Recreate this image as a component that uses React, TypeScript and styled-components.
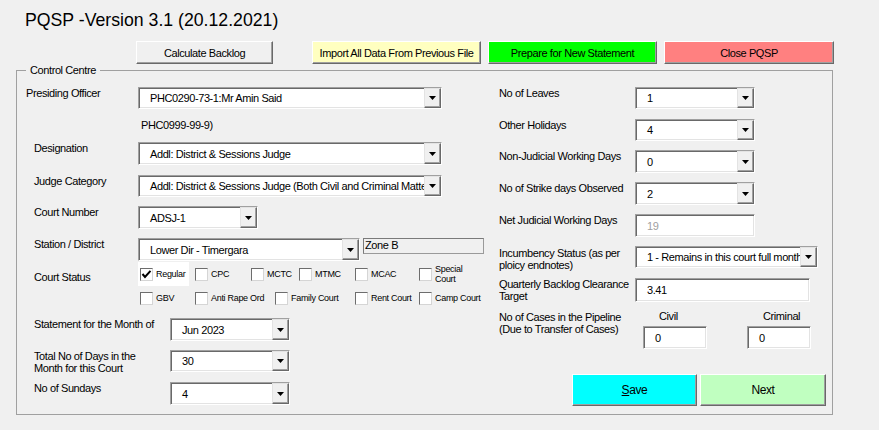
import React from "react";
import styled, { createGlobalStyle } from "styled-components";

const Global = createGlobalStyle`
  html, body { margin: 0; padding: 0; background: #f0f0f0; }
  * { box-sizing: border-box; }
`;

const Window = styled.div`
  width: 879px;
  height: 430px;
  overflow: hidden;
  background: #f0f0f0;
  font-family: "Liberation Sans", Arial, sans-serif;
  font-size: 11px;
  letter-spacing: -0.4px;
  color: #000;
  display: flex;
  flex-direction: column;
`;

const Title = styled.div`
  padding: 10px 0 0 25px;
  height: 30px;
  font-size: 17.7px;
  line-height: 20px;
  letter-spacing: 0;
  color: #000;
`;

const ButtonBar = styled.div`
  display: flex;
  margin-top: 11px;
  padding-left: 136px;
  height: 23px;
`;

const RaisedButton = styled.button<{ $w: number; $h: number; $bg: string; $ml?: number; $fs?: number }>`
  width: ${(p) => p.$w}px;
  height: ${(p) => p.$h}px;
  margin: 0 0 0 ${(p) => p.$ml ?? 0}px;
  padding: 0;
  background: ${(p) => p.$bg};
  border-style: solid;
  border-width: 1px;
  border-color: #ffffff #696969 #696969 #ffffff;
  box-shadow: inset -1px -1px 0 #a0a0a0;
  font-family: inherit;
  font-size: ${(p) => p.$fs ?? 11}px;
  letter-spacing: -0.4px;
  color: #000;
  display: flex;
  align-items: center;
  justify-content: center;
  cursor: default;
`;

const Frame = styled.fieldset`
  margin: 0 0 0 16px;
  padding: 0;
  width: 817px;
  height: 351px;
  min-width: 0;
  border: 1px solid #a0a0a0;
`;

const Legend = styled.legend`
  margin-left: 9px;
  padding: 0 4px;
  font-size: 11px;
  line-height: 12px;
`;

const Columns = styled.div`
  display: grid;
  grid-template-columns: 473px 1fr;
`;

const Column = styled.div`
  display: flex;
  flex-direction: column;
`;

const Row = styled.div<{ $mt: number; $h: number }>`
  display: flex;
  align-items: flex-start;
  margin-top: ${(p) => p.$mt}px;
  height: ${(p) => p.$h}px;
`;

const Label = styled.div<{ $w: number; $pl: number; $pt?: number }>`
  width: ${(p) => p.$w}px;
  flex: none;
  padding-left: ${(p) => p.$pl}px;
  padding-top: ${(p) => p.$pt ?? 0}px;
  line-height: 12px;
`;

const Note = styled.div<{ $pl: number }>`
  padding-left: ${(p) => p.$pl}px;
  line-height: 12px;
`;

const Sunken = styled.div<{ $w: number; $h: number }>`
  width: ${(p) => p.$w}px;
  height: ${(p) => p.$h}px;
  flex: none;
  display: flex;
  background: #fff;
  border-style: solid;
  border-width: 1px;
  border-color: #a0a0a0 #ffffff #ffffff #a0a0a0;
  box-shadow: inset 1px 1px 0 #696969, inset -1px -1px 0 #e3e3e3;
`;

const FieldText = styled.div<{ $muted?: boolean }>`
  flex: 1;
  min-width: 0;
  padding-left: 11px;
  display: flex;
  align-items: center;
  white-space: nowrap;
  overflow: hidden;
  color: ${(p) => (p.$muted ? "#a0a0a0" : "#000")};
`;

const DropButton = styled.div`
  width: 17px;
  flex: none;
  background: #f0f0f0;
  border-style: solid;
  border-width: 1px;
  border-color: #e3e3e3 #696969 #696969 #e3e3e3;
  box-shadow: inset -1px -1px 0 #a0a0a0;
  display: flex;
  align-items: center;
  justify-content: center;
`;

const ZoneBox = styled.div`
  width: 121px;
  height: 16px;
  margin-left: 3px;
  border: 1px solid #7a7a7a;
  border-right-color: #9a9a9a;
  border-bottom-color: #9a9a9a;
  padding-left: 1px;
  line-height: 13px;
`;

const CheckArea = styled.div`
  display: flex;
  flex-direction: column;
`;

const CheckRow = styled.div`
  display: flex;
`;

const CheckItem = styled.div<{ $w: number; $hl?: boolean; $mr?: number }>`
  width: ${(p) => p.$w}px;
  margin-right: ${(p) => p.$mr ?? 0}px;
  height: 24px;
  display: flex;
  align-items: center;
  padding-left: 2px;
  background: ${(p) => (p.$hl ? "#fff" : "transparent")};
`;

const Box = styled.div`
  width: 13px;
  height: 13px;
  flex: none;
  background: #fff;
  border-style: solid;
  border-width: 1px;
  border-color: #6d6d6d #d5d5d5 #d5d5d5 #6d6d6d;
  display: flex;
  align-items: center;
  justify-content: center;
`;

const CheckText = styled.span`
  margin-left: 3px;
  font-size: 9px;
  line-height: 10px;
  letter-spacing: -0.3px;
`;

const PipeGroup = styled.div<{ $ml: number }>`
  margin-left: ${(p) => p.$ml}px;
  display: flex;
  flex-direction: column;
`;

const PipeHead = styled.div`
  padding-left: 16px;
  line-height: 12px;
  height: 16px;
`;

const ActionBar = styled.div`
  display: flex;
  gap: 3px;
  margin-top: 25px;
  padding-left: 82px;
`;

const Arrow = () => (
  <svg width="7" height="4" viewBox="0 0 7 4">
    <path d="M0 0 H7 L3.5 4 Z" fill="#000" />
  </svg>
);

const Tick = () => (
  <svg width="11" height="11" viewBox="0 0 11 11">
    <path d="M1.5 5 L4 8 L9.5 1.8" fill="none" stroke="#000" strokeWidth="2" />
  </svg>
);

const Combo = ({ w, h, value }: { w: number; h: number; value: string }) => (
  <Sunken $w={w} $h={h}>
    <FieldText>{value}</FieldText>
    <DropButton>
      <Arrow />
    </DropButton>
  </Sunken>
);

const TextBox = ({ w, h, value, muted }: { w: number; h: number; value: string; muted?: boolean }) => (
  <Sunken $w={w} $h={h}>
    <FieldText $muted={muted}>{value}</FieldText>
  </Sunken>
);

const Check = ({ w, label, checked, hl, mr }: { w: number; label: React.ReactNode; checked?: boolean; hl?: boolean; mr?: number }) => (
  <CheckItem $w={w} $hl={hl} $mr={mr}>
    <Box>{checked && <Tick />}</Box>
    <CheckText>{label}</CheckText>
  </CheckItem>
);

export default function App() {
  return (
    <>
      <Global />
      <Window>
        <Title>PQSP -Version 3.1 (20.12.2021)</Title>
        <ButtonBar>
          <RaisedButton $w={137} $h={23} $bg="#f0f0f0">Calculate Backlog</RaisedButton>
          <RaisedButton $w={169} $h={23} $bg="#ffffc0" $ml={39}>Import All Data From Previous File</RaisedButton>
          <RaisedButton $w={169} $h={23} $bg="#00ff00" $ml={7}>Prepare for New Statement</RaisedButton>
          <RaisedButton $w={170} $h={23} $bg="#ff8080" $ml={7}>Close PQSP</RaisedButton>
        </ButtonBar>
        <Frame>
          <Legend>Control Centre</Legend>
          <Columns>
            <Column>
              <Row $mt={11} $h={22}>
                <Label $w={121} $pl={9}>Presiding Officer</Label>
                <Combo w={304} h={22} value="PHC0290-73-1:Mr Amin Said" />
              </Row>
              <Row $mt={10} $h={12}>
                <Note $pl={124}>PHC0999-99-9)</Note>
              </Row>
              <Row $mt={11} $h={23}>
                <Label $w={121} $pl={17}>Designation</Label>
                <Combo w={304} h={23} value="Addl: District & Sessions Judge" />
              </Row>
              <Row $mt={10} $h={22}>
                <Label $w={121} $pl={17}>Judge Category</Label>
                <Combo w={304} h={22} value="Addl: District & Sessions Judge (Both Civil and Criminal Matters)" />
              </Row>
              <Row $mt={9} $h={23}>
                <Label $w={121} $pl={17}>Court Number</Label>
                <Combo w={120} h={23} value="ADSJ-1" />
              </Row>
              <Row $mt={9} $h={23}>
                <Label $w={121} $pl={17}>Station / District</Label>
                <Combo w={222} h={23} value="Lower Dir - Timergara" />
                <ZoneBox>Zone B</ZoneBox>
              </Row>
              <Row $mt={1} $h={48}>
                <Label $w={121} $pl={17} $pt={9}>Court Status</Label>
                <CheckArea>
                  <CheckRow>
                    <Check w={51} mr={4} hl checked label="Regular" />
                    <Check w={56} label="CPC" />
                    <Check w={48} label="MCTC" />
                    <Check w={56} label="MTMC" />
                    <Check w={64} label="MCAC" />
                    <Check w={70} label={<>Special<br />Court</>} />
                  </CheckRow>
                  <CheckRow>
                    <Check w={55} label="GBV" />
                    <Check w={80} label="Anti Rape Ord" />
                    <Check w={80} label="Family Court" />
                    <Check w={64} label="Rent Court" />
                    <Check w={70} label="Camp Court" />
                  </CheckRow>
                </CheckArea>
              </Row>
              <Row $mt={8} $h={23}>
                <Label $w={153} $pl={17}>Statement for the Month of</Label>
                <Combo w={120} h={23} value="Jun 2023" />
              </Row>
              <Row $mt={9} $h={22}>
                <Label $w={153} $pl={17}>Total No of Days in the<br />Month for this Court</Label>
                <Combo w={120} h={22} value="30" />
              </Row>
              <Row $mt={10} $h={23}>
                <Label $w={153} $pl={17}>No of Sundays</Label>
                <Combo w={120} h={23} value="4" />
              </Row>
            </Column>
            <Column>
              <Row $mt={11} $h={22}>
                <Label $w={145} $pl={9}>No of Leaves</Label>
                <Combo w={120} h={22} value="1" />
              </Row>
              <Row $mt={10} $h={22}>
                <Label $w={145} $pl={9}>Other Holidays</Label>
                <Combo w={120} h={22} value="4" />
              </Row>
              <Row $mt={9} $h={23}>
                <Label $w={145} $pl={9}>Non-Judicial Working Days</Label>
                <Combo w={120} h={23} value="0" />
              </Row>
              <Row $mt={9} $h={23}>
                <Label $w={145} $pl={9}>No of Strike days Observed</Label>
                <Combo w={120} h={23} value="2" />
              </Row>
              <Row $mt={9} $h={23}>
                <Label $w={145} $pl={9}>Net Judicial Working Days</Label>
                <TextBox w={120} h={23} value="19" muted />
              </Row>
              <Row $mt={9} $h={22}>
                <Label $w={145} $pl={9} $pt={1}>Incumbency Status (as per<br />ploicy endnotes)</Label>
                <Combo w={183} h={22} value="1 - Remains in this court full month" />
              </Row>
              <Row $mt={10} $h={24}>
                <Label $w={145} $pl={9}>Quarterly Backlog Clearance<br />Target</Label>
                <TextBox w={175} h={24} value="3.41" />
              </Row>
              <Row $mt={8} $h={39}>
                <Label $w={145} $pl={9} $pt={1}>No of Cases in the Pipeline<br />(Due to Transfer of Cases)</Label>
                <PipeGroup $ml={8}>
                  <PipeHead>Civil</PipeHead>
                  <TextBox w={64} h={23} value="0" />
                </PipeGroup>
                <PipeGroup $ml={40}>
                  <PipeHead>Criminal</PipeHead>
                  <TextBox w={64} h={23} value="0" />
                </PipeGroup>
              </Row>
              <ActionBar>
                <RaisedButton $w={125} $h={32} $bg="#00ffff" $fs={12}>
                  <span><u>S</u>ave</span>
                </RaisedButton>
                <RaisedButton $w={126} $h={32} $bg="#c0ffc0" $fs={12}>Next</RaisedButton>
              </ActionBar>
            </Column>
          </Columns>
        </Frame>
      </Window>
    </>
  );
}
